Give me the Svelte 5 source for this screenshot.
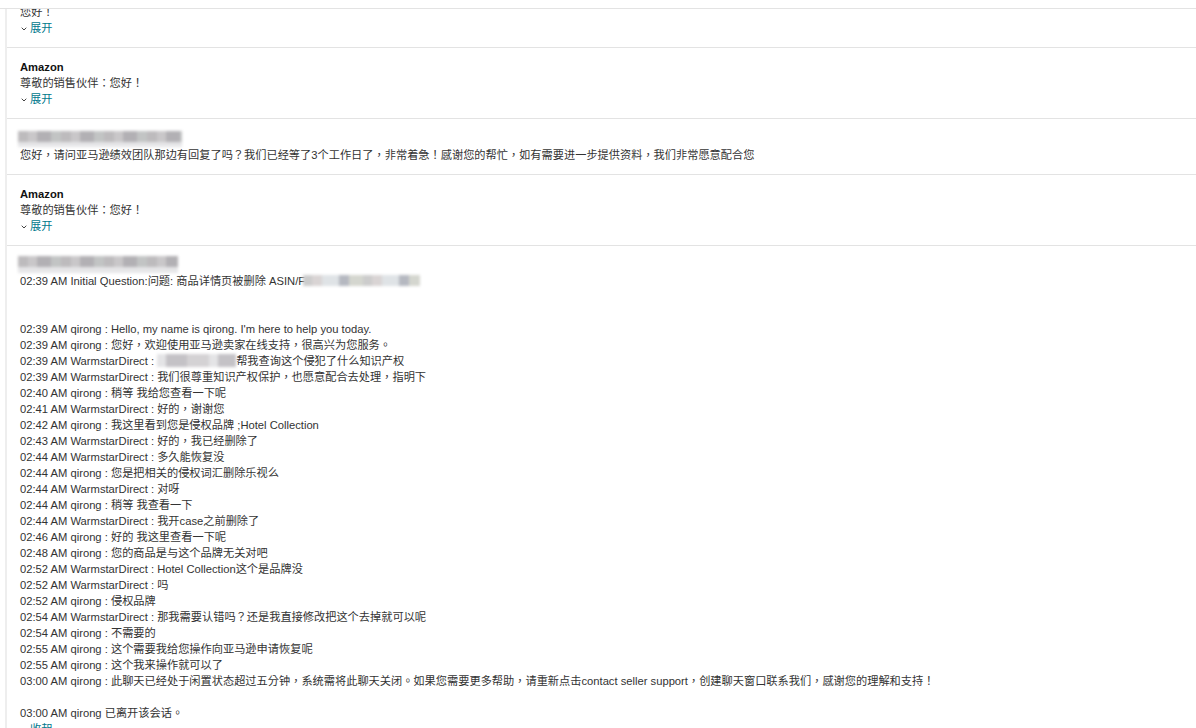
<script>
  const lines = [
    "02:39 AM qirong : Hello, my name is qirong. I'm here to help you today.",
    "02:39 AM qirong : 您好，欢迎使用亚马逊卖家在线支持，很高兴为您服务。",
    null,
    "02:39 AM WarmstarDirect : 我们很尊重知识产权保护，也愿意配合去处理，指明下",
    "02:40 AM qirong : 稍等 我给您查看一下呢",
    "02:41 AM WarmstarDirect : 好的，谢谢您",
    "02:42 AM qirong : 我这里看到您是侵权品牌 ;Hotel Collection",
    "02:43 AM WarmstarDirect : 好的，我已经删除了",
    "02:44 AM WarmstarDirect : 多久能恢复没",
    "02:44 AM qirong : 您是把相关的侵权词汇删除乐视么",
    "02:44 AM WarmstarDirect : 对呀",
    "02:44 AM qirong : 稍等 我查看一下",
    "02:44 AM WarmstarDirect : 我开case之前删除了",
    "02:46 AM qirong : 好的 我这里查看一下呢",
    "02:48 AM qirong : 您的商品是与这个品牌无关对吧",
    "02:52 AM WarmstarDirect : Hotel Collection这个是品牌没",
    "02:52 AM WarmstarDirect : 吗",
    "02:52 AM qirong : 侵权品牌",
    "02:54 AM WarmstarDirect : 那我需要认错吗？还是我直接修改把这个去掉就可以呢",
    "02:54 AM qirong : 不需要的",
    "02:55 AM qirong : 这个需要我给您操作向亚马逊申请恢复呢",
    "02:55 AM qirong : 这个我来操作就可以了",
    "03:00 AM qirong : 此聊天已经处于闲置状态超过五分钟，系统需将此聊天关闭。如果您需要更多帮助，请重新点击contact seller support，创建聊天窗口联系我们，感谢您的理解和支持！"
  ];
</script>

<div class="page">
  <div class="topbar"></div>
  <div class="thread">
    <section class="first">
      <p>您好！</p>
      <a class="toggle" href="#a"><svg viewBox="0 0 6 4" width="6" height="4"><path d="M.7.7 3 3 5.3.7" /></svg>展开</a>
    </section>
    <section>
      <p class="who">Amazon</p>
      <p>尊敬的销售伙伴：您好！</p>
      <a class="toggle" href="#a"><svg viewBox="0 0 6 4" width="6" height="4"><path d="M.7.7 3 3 5.3.7" /></svg>展开</a>
    </section>
    <section class="short">
      <div class="mask name"></div>
      <p>您好，请问亚马逊绩效团队那边有回复了吗？我们已经等了3个工作日了，非常着急！感谢您的帮忙，如有需要进一步提供资料，我们非常愿意配合您</p>
    </section>
    <section>
      <p class="who">Amazon</p>
      <p>尊敬的销售伙伴：您好！</p>
      <a class="toggle" href="#a"><svg viewBox="0 0 6 4" width="6" height="4"><path d="M.7.7 3 3 5.3.7" /></svg>展开</a>
    </section>
    <section class="chat">
      <div class="mask name tall"></div>
      <p>02:39 AM Initial Question:问题: 商品详情页被删除 ASIN/F<span class="mask asin"></span></p>
      <div class="gap"></div>
      {#each lines as line}
        {#if line}
          <p>{line}</p>
        {:else}
          <p>02:39 AM WarmstarDirect : <span class="mask msg"></span>帮我查询这个侵犯了什么知识产权</p>
        {/if}
      {/each}
      <div class="gap small"></div>
      <p>03:00 AM qirong 已离开该会话。</p>
      <a class="toggle" href="#a"><svg viewBox="0 0 6 4" width="6" height="4"><path d="M.7 3.3 3 1 5.3 3.3" /></svg>收起</a>
    </section>
  </div>
</div>

<style>
  :global(body) {
    margin: 0;
    background: #fff;
  }
  .page {
    height: 728px;
    overflow: hidden;
    font-family: "Liberation Sans", "Noto Sans CJK TC", sans-serif;
    font-size: 11.21px;
    line-height: 16px;
    color: #333;
  }
  .topbar {
    position: relative;
    z-index: 1;
    height: 8px;
    background: #fff;
    border-bottom: 1px solid #e3e3e3;
  }
  .thread {
    margin-left: 5px;
    border-left: 2px solid #eee;
  }
  section {
    padding: 11px 13px;
    border-bottom: 1px solid #e3e3e3;
  }
  section.first {
    margin-top: -5px;
    padding-top: 0;
  }
  section.short {
    padding-top: 12px;
    padding-bottom: 11px;
  }
  section.chat {
    border-bottom: 0;
    padding-top: 10px;
  }
  p {
    margin: 0;
    white-space: nowrap;
  }
  .who {
    font-weight: 700;
    color: #111;
  }
  .toggle {
    display: flex;
    align-items: center;
    gap: 3px;
    margin-left: 1px;
    color: #00788c;
    text-decoration: none;
  }
  .toggle svg {
    fill: none;
    stroke: #444;
    stroke-width: 1;
    margin-top: 1px;
  }
  .gap {
    height: 32px;
  }
  .gap.small {
    height: 16px;
  }
  .mask {
    display: block;
    filter: blur(1.4px);
  }
  .name {
    width: 164px;
    height: 16px;
    margin-left: -2px;
    background:
      linear-gradient(#0000 0 11px, #e6e6e8 11px),
      repeating-linear-gradient(90deg, #bdbbbd 0 10px, #c9c7c9 10px 19px, #b2b0b4 19px 33px, #c2c4c4 33px 43px);
  }
  .name.tall {
    height: 17px;
    width: 160px;
  }
  .asin {
    display: inline-block;
    width: 117px;
    height: 11px;
    margin-left: -2px;
    vertical-align: -1px;
    background: repeating-linear-gradient(90deg, #ccc 0 9px, #d9d4d4 9px 19px, #dfe3e6 19px 36px, #b5b8c0 36px 46px, #d4d6cf 46px 60px);
  }
  .msg {
    display: inline-block;
    width: 79px;
    height: 13px;
    vertical-align: -2px;
    background: repeating-linear-gradient(90deg, #e4e4e6 0 9px, #c4c2c6 9px 30px, #d4d2d4 30px 52px);
  }
</style>
